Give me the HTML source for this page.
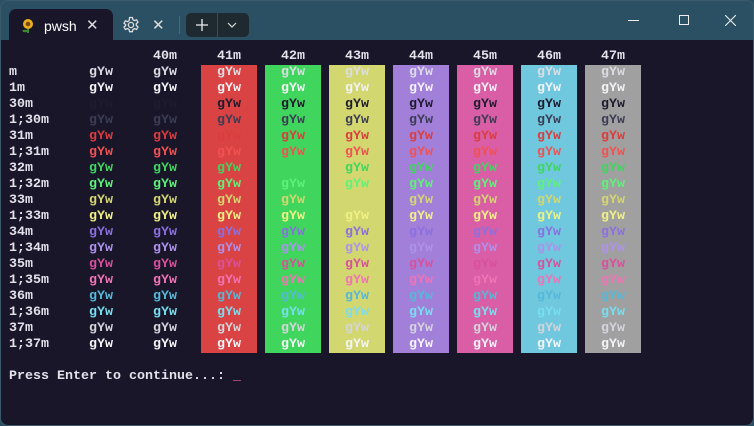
<!DOCTYPE html>
<html><head><meta charset="utf-8"><style>
*{margin:0;padding:0;box-sizing:border-box}
body{width:754px;height:426px;overflow:hidden;background:#2b5063;font-family:"Liberation Mono",monospace;}
.win{position:absolute;left:0;top:0;width:754px;height:426px;background:#2b5063;border-radius:8px;overflow:hidden;box-shadow:inset 0 0 0 1px #3a5a6a}
.term{position:absolute;left:1px;top:40px;width:752px;height:385px;background:#19162a;border-radius:0 0 7px 7px}
.tab{position:absolute;left:9px;top:9px;width:104px;height:32px;background:#19162a;border-radius:7px 7px 0 0}
.tab span{position:absolute;left:35px;top:9px;font:14px "Liberation Sans",sans-serif;color:#fff}
.x{position:absolute;color:#ddd;font:15px "Liberation Sans",sans-serif}
.btns{position:absolute;left:186px;top:13px;width:63px;height:24px;background:#1f2a30;border-radius:5px}
.bg{position:absolute;top:65px;width:56px;height:288px}
.r{position:absolute;left:0;height:16px;line-height:16px;font-size:13.33px;font-weight:bold;white-space:pre;width:754px}
.r b{position:absolute;top:0}
.r b:nth-child(1){left:9px}
.r b:nth-child(2){left:89px}
.r b:nth-child(3){left:153px}
.r b:nth-child(4){left:217px}
.r b:nth-child(5){left:281px}
.r b:nth-child(6){left:345px}
.r b:nth-child(7){left:409px}
.r b:nth-child(8){left:473px}
.r b:nth-child(9){left:537px}
.r b:nth-child(10){left:601px}
.l{color:#e2e2ea}
</style></head><body><div class="win">
<div class="tab">
<svg style="position:absolute;left:12px;top:9px" width="14" height="16" viewBox="0 0 14 16"><circle cx="7" cy="6" r="5" fill="#e8b020"/><circle cx="7" cy="6" r="2.3" fill="#7a4a10"/><rect x="6" y="11" width="2" height="4" fill="#3a8a30"/><ellipse cx="4" cy="13" rx="2.5" ry="1.2" fill="#3a8a30"/></svg>
<span>pwsh</span>
<div class="x" style="left:77px;top:7px">✕</div>
</div>
<svg style="position:absolute;left:122px;top:16px" width="18" height="18" viewBox="0 0 18 18" fill="none" stroke="#ddd" stroke-width="1.3"><circle cx="9" cy="9" r="2.6"/><path d="M7.6 1.5h2.8l.5 2.2 1.6.9 2.1-.8 1.4 2.4-1.7 1.5v1.8l1.7 1.5-1.4 2.4-2.1-.8-1.6.9-.5 2.2H7.6l-.5-2.2-1.6-.9-2.1.8-1.4-2.4 1.7-1.5V8.7L2 7.2l1.4-2.4 2.1.8 1.6-.9z"/></svg>
<div class="x" style="left:152px;top:16px">✕</div>
<div style="position:absolute;left:179px;top:16px;width:1px;height:18px;background:#4a6a78"></div>
<div class="btns"><div style="position:absolute;left:31px;top:0;width:1px;height:24px;background:#445"></div>
<svg style="position:absolute;left:10px;top:6px" width="12" height="12"><path d="M6 0v12M0 6h12" stroke="#eee" stroke-width="1.3"/></svg>
<svg style="position:absolute;left:41px;top:9px" width="10" height="6"><path d="M1 1l4 4 4-4" stroke="#ddd" fill="none" stroke-width="1.2"/></svg></div>
<div style="position:absolute;left:628px;top:20px;width:11px;height:1px;background:#eee"></div>
<div style="position:absolute;left:679px;top:15px;width:10px;height:10px;border:1px solid #eee"></div>
<svg style="position:absolute;left:725px;top:15px" width="11" height="11"><path d="M0 0l11 11M11 0L0 11" stroke="#eee" stroke-width="1.1"/></svg>
<div class="term"></div>
<div class="bg" style="left:201px;background:#da4343"></div>
<div class="bg" style="left:265px;background:#40d65e"></div>
<div class="bg" style="left:329px;background:#d3d76f"></div>
<div class="bg" style="left:393px;background:#a27fd9"></div>
<div class="bg" style="left:457px;background:#d95ea6"></div>
<div class="bg" style="left:521px;background:#6fc8dd"></div>
<div class="bg" style="left:585px;background:#a0a0a0"></div>
<div class="r l" style="top:49px"><b></b><b></b><b>40m</b><b>41m</b><b>42m</b><b>43m</b><b>44m</b><b>45m</b><b>46m</b><b>47m</b></div>
<div class="r" style="top:65px;color:#dcdce4"><b class="l">m</b><b>gYw</b><b>gYw</b><b>gYw</b><b>gYw</b><b>gYw</b><b>gYw</b><b>gYw</b><b>gYw</b><b>gYw</b></div>
<div class="r" style="top:81px;color:#f2f2f6"><b class="l">1m</b><b>gYw</b><b>gYw</b><b>gYw</b><b>gYw</b><b>gYw</b><b>gYw</b><b>gYw</b><b>gYw</b><b>gYw</b></div>
<div class="r" style="top:97px;color:#1e1b2e"><b class="l">30m</b><b>gYw</b><b>gYw</b><b>gYw</b><b>gYw</b><b>gYw</b><b>gYw</b><b>gYw</b><b>gYw</b><b>gYw</b></div>
<div class="r" style="top:113px;color:#3c3c55"><b class="l">1;30m</b><b>gYw</b><b>gYw</b><b>gYw</b><b>gYw</b><b>gYw</b><b>gYw</b><b>gYw</b><b>gYw</b><b>gYw</b></div>
<div class="r" style="top:129px;color:#da3d3d"><b class="l">31m</b><b>gYw</b><b>gYw</b><b>gYw</b><b>gYw</b><b>gYw</b><b>gYw</b><b>gYw</b><b>gYw</b><b>gYw</b></div>
<div class="r" style="top:145px;color:#f05252"><b class="l">1;31m</b><b>gYw</b><b>gYw</b><b>gYw</b><b>gYw</b><b>gYw</b><b>gYw</b><b>gYw</b><b>gYw</b><b>gYw</b></div>
<div class="r" style="top:161px;color:#40d65e"><b class="l">32m</b><b>gYw</b><b>gYw</b><b>gYw</b><b>gYw</b><b>gYw</b><b>gYw</b><b>gYw</b><b>gYw</b><b>gYw</b></div>
<div class="r" style="top:177px;color:#5ef278"><b class="l">1;32m</b><b>gYw</b><b>gYw</b><b>gYw</b><b>gYw</b><b>gYw</b><b>gYw</b><b>gYw</b><b>gYw</b><b>gYw</b></div>
<div class="r" style="top:193px;color:#d3d76f"><b class="l">33m</b><b>gYw</b><b>gYw</b><b>gYw</b><b>gYw</b><b>gYw</b><b>gYw</b><b>gYw</b><b>gYw</b><b>gYw</b></div>
<div class="r" style="top:209px;color:#f0f184"><b class="l">1;33m</b><b>gYw</b><b>gYw</b><b>gYw</b><b>gYw</b><b>gYw</b><b>gYw</b><b>gYw</b><b>gYw</b><b>gYw</b></div>
<div class="r" style="top:225px;color:#8a70e0"><b class="l">34m</b><b>gYw</b><b>gYw</b><b>gYw</b><b>gYw</b><b>gYw</b><b>gYw</b><b>gYw</b><b>gYw</b><b>gYw</b></div>
<div class="r" style="top:241px;color:#ad92ec"><b class="l">1;34m</b><b>gYw</b><b>gYw</b><b>gYw</b><b>gYw</b><b>gYw</b><b>gYw</b><b>gYw</b><b>gYw</b><b>gYw</b></div>
<div class="r" style="top:257px;color:#d9509c"><b class="l">35m</b><b>gYw</b><b>gYw</b><b>gYw</b><b>gYw</b><b>gYw</b><b>gYw</b><b>gYw</b><b>gYw</b><b>gYw</b></div>
<div class="r" style="top:273px;color:#f272b6"><b class="l">1;35m</b><b>gYw</b><b>gYw</b><b>gYw</b><b>gYw</b><b>gYw</b><b>gYw</b><b>gYw</b><b>gYw</b><b>gYw</b></div>
<div class="r" style="top:289px;color:#55b8d8"><b class="l">36m</b><b>gYw</b><b>gYw</b><b>gYw</b><b>gYw</b><b>gYw</b><b>gYw</b><b>gYw</b><b>gYw</b><b>gYw</b></div>
<div class="r" style="top:305px;color:#78def0"><b class="l">1;36m</b><b>gYw</b><b>gYw</b><b>gYw</b><b>gYw</b><b>gYw</b><b>gYw</b><b>gYw</b><b>gYw</b><b>gYw</b></div>
<div class="r" style="top:321px;color:#d4d4dc"><b class="l">37m</b><b>gYw</b><b>gYw</b><b>gYw</b><b>gYw</b><b>gYw</b><b>gYw</b><b>gYw</b><b>gYw</b><b>gYw</b></div>
<div class="r" style="top:337px;color:#f4f4f8"><b class="l">1;37m</b><b>gYw</b><b>gYw</b><b>gYw</b><b>gYw</b><b>gYw</b><b>gYw</b><b>gYw</b><b>gYw</b><b>gYw</b></div>
<div class="r l" style="top:369px"><b>Press Enter to continue...: <span style="color:#f060b0">_</span></b></div>
</div></body></html>
